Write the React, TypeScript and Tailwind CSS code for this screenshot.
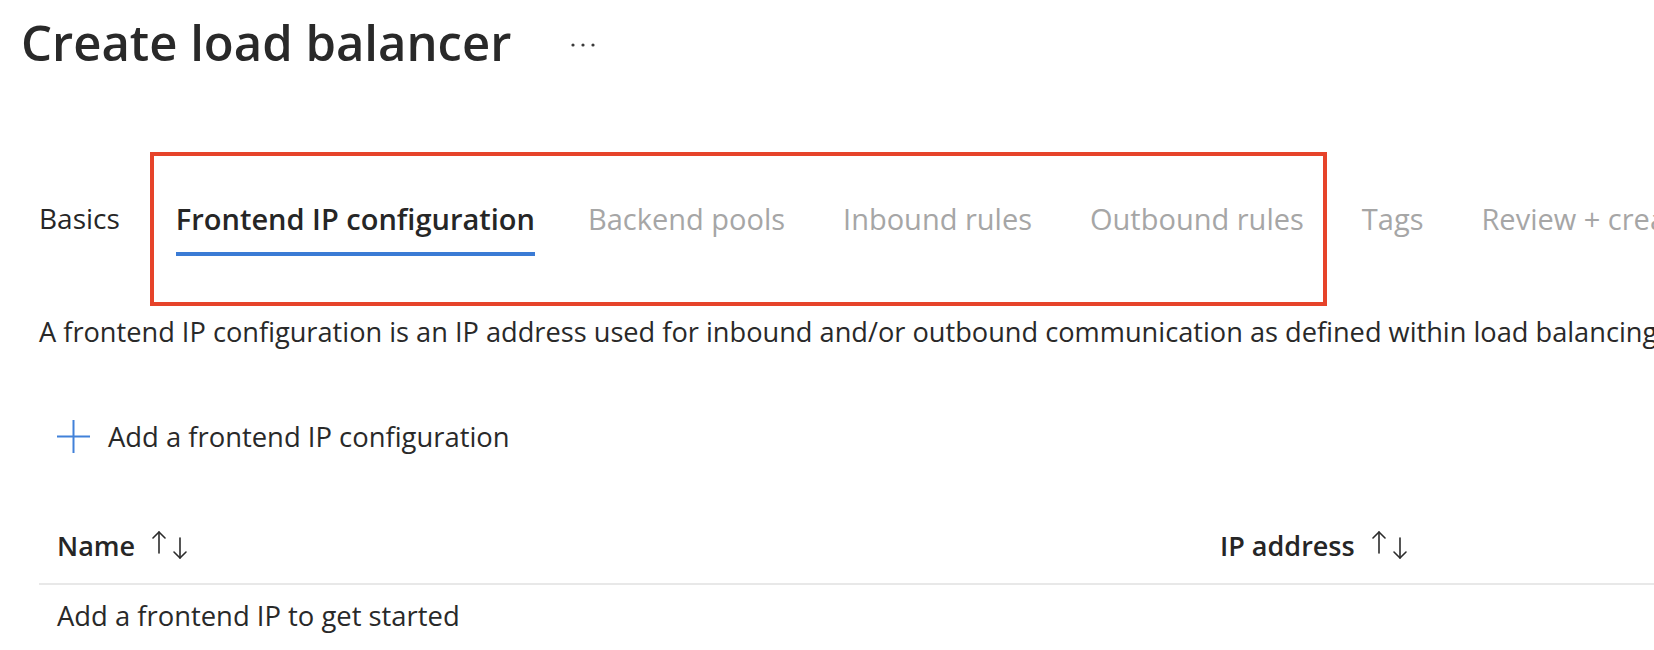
import React from 'react';

const tabs = [
  { label: 'Basics', state: 'done' },
  { label: 'Frontend IP configuration', state: 'active' },
  { label: 'Backend pools', state: 'todo' },
  { label: 'Inbound rules', state: 'todo' },
  { label: 'Outbound rules', state: 'todo' },
  { label: 'Tags', state: 'todo' },
  { label: 'Review + create', state: 'todo' },
];

const SortArrows: React.FC = () => (
  <svg width="36" height="30" viewBox="0 0 36 30" fill="none" stroke="#2b2b2b" strokeWidth="1.6" strokeLinecap="round" strokeLinejoin="round">
    <path d="M7 2 L7 23" />
    <path d="M1 8 L7 2 L13 8" />
    <path d="M28 8 L28 28" />
    <path d="M22 22 L28 28 L34 22" />
  </svg>
);

const App: React.FC = () => {
  return (
    <div className="relative w-[1654px] h-[650px] overflow-hidden bg-white text-[#292929] font-['Open_Sans',sans-serif]">
      {/* header */}
      <div className="flex items-center pl-[21px] pt-[18px]">
        <h1 className="text-[49px] leading-none font-semibold text-[#292929] whitespace-nowrap">Create load balancer</h1>
        <svg className="ml-[59px] mt-[4px]" width="26" height="6" viewBox="0 0 26 6" fill="#3a3a3a">
          <circle cx="3" cy="3" r="1.6" />
          <circle cx="13" cy="3" r="1.6" />
          <circle cx="23" cy="3" r="1.6" />
        </svg>
      </div>

      {/* tabs */}
      <div className="flex pl-[39px] mt-[137px] whitespace-nowrap">
        {tabs.map((t, i) => (
          <div
            key={t.label}
            className={
              i === 0 ? 'flex flex-col' : i === 1 ? 'flex flex-col ml-[56px]' : i === 2 ? 'flex flex-col ml-[53px]' : 'flex flex-col ml-[58px]'
            }
          >
            <span
              className={
                t.state === 'active'
                  ? 'text-[29px] leading-none font-semibold text-[#262626]'
                  : t.state === 'done'
                  ? 'text-[28px] leading-none text-[#262626]'
                  : 'text-[29px] leading-none text-[#a6a6a6]'
              }
            >
              {t.label}
            </span>
            <div className={t.state === 'active' ? 'mt-[19px] h-[4px] bg-[#3a7bd5]' : 'mt-[19px] h-[4px]'} />
          </div>
        ))}
      </div>

      {/* description */}
      <p className="pl-[39px] mt-[62px] text-[27.2px] leading-none whitespace-nowrap text-[#292929]">
        A frontend IP configuration is an IP address used for inbound and/or outbound communication as defined within load balancing rules.
      </p>

      {/* add button */}
      <div className="flex items-center pl-[57px] mt-[75px]">
        <svg width="33" height="33" viewBox="0 0 33 33" stroke="#4181d9" strokeWidth="2">
          <path d="M16.5 0 L16.5 33" />
          <path d="M0 16.5 L33 16.5" />
        </svg>
        <span className="ml-[18px] text-[27.4px] leading-none whitespace-nowrap text-[#292929]">Add a frontend IP configuration</span>
      </div>

      {/* table */}
      <div className="ml-[39px] mt-[77px]">
        <div className="flex items-center pb-[23px] border-b-2 border-[#e8e8e8]">
          <div className="flex items-center w-[1181px] pl-[18px]">
            <span className="text-[27px] leading-none font-semibold text-[#262626]">Name</span>
            <span className="ml-[17px]"><SortArrows /></span>
          </div>
          <div className="flex items-center">
            <span className="text-[27px] leading-none font-semibold text-[#262626] whitespace-nowrap">IP address</span>
            <span className="ml-[17px]"><SortArrows /></span>
          </div>
        </div>
        <div className="pl-[18px] pt-[17px] text-[27.4px] leading-none whitespace-nowrap text-[#292929]">
          Add a frontend IP to get started
        </div>
      </div>

      {/* highlight annotation */}
      <div className="absolute left-[150px] top-[152px] w-[1177px] h-[154px] border-4 border-[#e6432a]" />
    </div>
  );
};

export default App;
